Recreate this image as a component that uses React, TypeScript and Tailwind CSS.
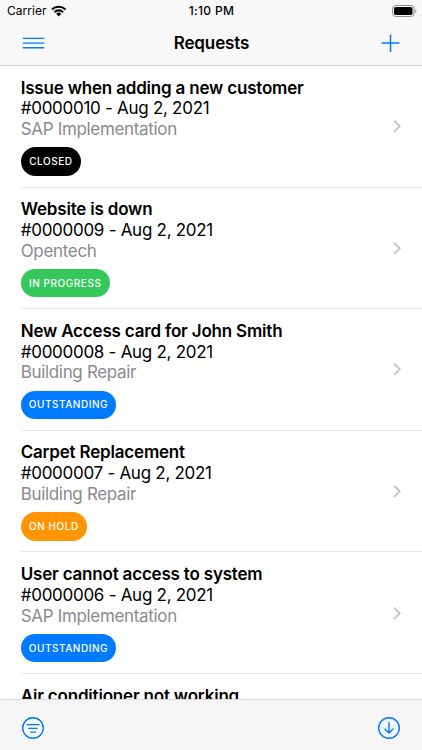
type Status = 'CLOSED' | 'IN PROGRESS' | 'OUTSTANDING' | 'ON HOLD';

interface Request {
  title: string;
  details?: {
    id: string;
    date: string;
    category: string;
    status: Status;
  };
}

const REQUESTS: Request[] = [
  { title: 'Issue when adding a new customer', details: { id: '0000010', date: 'Aug 2, 2021', category: 'SAP Implementation', status: 'CLOSED' } },
  { title: 'Website is down', details: { id: '0000009', date: 'Aug 2, 2021', category: 'Opentech', status: 'IN PROGRESS' } },
  { title: 'New Access card for John Smith', details: { id: '0000008', date: 'Aug 2, 2021', category: 'Building Repair', status: 'OUTSTANDING' } },
  { title: 'Carpet Replacement', details: { id: '0000007', date: 'Aug 2, 2021', category: 'Building Repair', status: 'ON HOLD' } },
  { title: 'User cannot access to system', details: { id: '0000006', date: 'Aug 2, 2021', category: 'SAP Implementation', status: 'OUTSTANDING' } },
  { title: 'Air conditioner not working' },
];

const STATUS_STYLES: Record<Status, string> = {
  'CLOSED': 'bg-black w-[60.5px]',
  'IN PROGRESS': 'bg-[#34c759] w-[89px]',
  'OUTSTANDING': 'bg-[#007aff] w-[95.5px]',
  'ON HOLD': 'bg-[#ff9500] w-[66.5px]',
};

function StatusBar() {
  return (
    <div className="grid h-[21px] grid-cols-3 items-center pl-[7px] pr-[5px] text-[12px] leading-none">
      <div className="flex items-center gap-[4px]">
        <span className="tracking-[0.05px]">Carrier</span>
        <svg width="15.5" height="12" viewBox="0 0 16 12" fill="none" stroke="black" strokeWidth="2.1">
          <path d="M1 4.4a10 10 0 0 1 14 0" />
          <path d="M3.5 7.2a6.4 6.4 0 0 1 9 0" />
          <path d="M8 11.6 5.4 8.9a3.7 3.7 0 0 1 5.2 0Z" fill="black" stroke="none" />
        </svg>
      </div>
      <span className="pr-px text-center font-medium tracking-[0.35px]">1:10 PM</span>
      <svg className="justify-self-end" width="25" height="12" viewBox="0 0 25 12" fill="none">
        <rect x="0.5" y="0.5" width="21.5" height="11" rx="3.2" stroke="#8e8e8e" />
        <rect x="2" y="2" width="18.5" height="8" rx="1.8" fill="black" />
        <path d="M23.3 4.2v3.6c.7-.3 1.1-1 1.1-1.8s-.4-1.5-1.1-1.8Z" fill="#8e8e8e" />
      </svg>
    </div>
  );
}

function NavBar() {
  return (
    <div className="flex h-[44px] items-center justify-between pl-[22px] pr-[22px]">
      <button aria-label="Menu">
        <svg width="24" height="14" viewBox="0 0 24 14" stroke="#007aff" strokeWidth="1.4">
          <path d="M.7 2.4h21.6M.7 7.1h21.6M.7 11.8h21.6" />
        </svg>
      </button>
      <h1 className="pt-px pr-[4px] text-[17px] font-semibold tracking-[-0.1px]">Requests</h1>
      <button aria-label="Add">
        <svg width="19" height="19" viewBox="0 0 19 19" stroke="#007aff" strokeWidth="1.5">
          <path d="M9.5.4v17.6M.6 9.1h17.8" />
        </svg>
      </button>
    </div>
  );
}

function RequestRow({ request }: { request: Request }) {
  const { title, details } = request;

  return (
    <li className="ml-[20.7px] flex h-[121.6px] items-center justify-between border-b border-[#e6e6e8] pr-[20px]">
      <div className="h-full pt-[11.7px] text-[17px] leading-[20.8px] whitespace-nowrap">
        <p className="font-semibold tracking-[-0.19px]">{title}</p>
        {details && (
          <>
            <p className="tracking-[-0.28px]">#{details.id} - {details.date}</p>
            <p className="tracking-[-0.33px] text-[#8a8a8e]">{details.category}</p>
            <span className={`mt-[7.3px] flex h-[28.5px] items-center justify-center rounded-full text-[10px] font-medium tracking-[0.55px] text-white ${STATUS_STYLES[details.status]}`}>
              {details.status}
            </span>
          </>
        )}
      </div>
      {details && (
        <svg width="10" height="14" viewBox="0 0 10 14" fill="none" stroke="#c4c4c7" strokeWidth="1.9">
          <path d="m2.1 1.7 5.6 5.6-5.6 5.6" />
        </svg>
      )}
    </li>
  );
}

function Toolbar() {
  return (
    <footer className="flex h-[51px] shrink-0 items-center justify-between border-t border-[#dcdcde] bg-[#f6f6f7] px-[21px] pt-[6px]">
      <button aria-label="Filter">
        <svg width="24" height="24" viewBox="0 0 24 24" fill="none" stroke="#007aff" strokeWidth="1.4" strokeLinecap="round">
          <circle cx="12" cy="12" r="10.3" />
          <path d="M6 8.6h12M7.9 12.4h8.2M9.5 16.1h5" />
        </svg>
      </button>
      <button aria-label="Download">
        <svg width="24" height="24" viewBox="0 0 24 24" fill="none" stroke="#007aff" strokeWidth="1.4" strokeLinecap="round" strokeLinejoin="round">
          <circle cx="12" cy="12" r="10.3" />
          <path d="M12 6.8v10M7.9 12.9l4.1 4.1 4.1-4.1" />
        </svg>
      </button>
    </footer>
  );
}

export default function App() {
  return (
    <div className="flex h-[750px] w-[422px] flex-col overflow-hidden bg-white font-['Inter',sans-serif] text-black">
      <header className="h-[66px] shrink-0 border-b border-[#d2d2d4] bg-[#f8f8f8]">
        <StatusBar />
        <NavBar />
      </header>
      <ul className="min-h-0 flex-1 overflow-hidden">
        {REQUESTS.map((request) => (
          <RequestRow key={request.title} request={request} />
        ))}
      </ul>
      <Toolbar />
    </div>
  );
}
